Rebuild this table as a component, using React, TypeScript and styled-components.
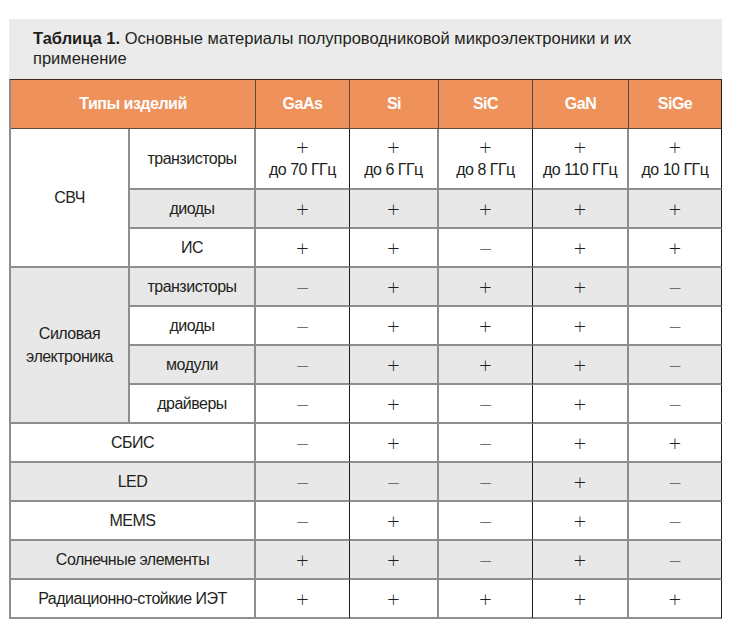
import { Fragment } from "react";
import styled, { createGlobalStyle } from "styled-components";

const GlobalStyle = createGlobalStyle`
  html, body {
    margin: 0;
    padding: 0;
    background: #ffffff;
  }
`;

const GRAY_LINE = "#8e8e8e";
const DARK_LINE = "#1c1c1c";
const HEAD_LINE = "#5e4a3e";

const materials = ["GaAs", "Si", "SiC", "GaN", "SiGe"];
// colour of the line on the right of each of the 7 columns
const columnLines = [GRAY_LINE, GRAY_LINE, DARK_LINE, GRAY_LINE, DARK_LINE, GRAY_LINE, DARK_LINE];

type Item = {
  name: string;
  values: string[];
  notes?: string[];
  shade: boolean;
};

type Group = {
  label: string;
  shade: boolean;
  items: Item[];
};

const groups: Group[] = [
  {
    label: "СВЧ",
    shade: false,
    items: [
      {
        name: "транзисторы",
        values: ["+", "+", "+", "+", "+"],
        notes: ["до 70 ГГц", "до 6 ГГц", "до 8 ГГц", "до 110 ГГц", "до 10 ГГц"],
        shade: false,
      },
      { name: "диоды", values: ["+", "+", "+", "+", "+"], shade: true },
      { name: "ИС", values: ["+", "+", "–", "+", "+"], shade: false },
    ],
  },
  {
    label: "Силовая электроника",
    shade: true,
    items: [
      { name: "транзисторы", values: ["–", "+", "+", "+", "–"], shade: true },
      { name: "диоды", values: ["–", "+", "+", "+", "–"], shade: false },
      { name: "модули", values: ["–", "+", "+", "+", "–"], shade: true },
      { name: "драйверы", values: ["–", "+", "–", "+", "–"], shade: false },
    ],
  },
];

const singles: Item[] = [
  { name: "СБИС", values: ["–", "+", "–", "+", "+"], shade: false },
  { name: "LED", values: ["–", "–", "–", "+", "–"], shade: true },
  { name: "MEMS", values: ["–", "+", "–", "+", "–"], shade: false },
  { name: "Солнечные элементы", values: ["+", "+", "–", "+", "–"], shade: true },
  { name: "Радиационно-стойкие ИЭТ", values: ["+", "+", "+", "+", "+"], shade: false },
];

const ValueCells = ({ item }: { item: Item }) => (
  <>
    {item.values.map((v, i) => (
      <Cell key={i} $shade={item.shade} $line={columnLines[i + 2]}>
        <Stack>
          <Sign $minus={v === "–"}>{v}</Sign>
          {item.notes && <Note>{item.notes[i]}</Note>}
        </Stack>
      </Cell>
    ))}
  </>
);

const GroupRows = ({ g }: { g: Group }) => (
  <>
    <Cell $shade={g.shade} $line={columnLines[0]} $rows={g.items.length}>
      <GroupLabel>{g.label}</GroupLabel>
    </Cell>
    {g.items.map((item) => (
      <Fragment key={item.name}>
        <Cell $shade={item.shade} $line={columnLines[1]}>
          {item.name}
        </Cell>
        <ValueCells item={item} />
      </Fragment>
    ))}
  </>
);

export default function App() {
  return (
    <>
      <GlobalStyle />
      <Figure>
        <Caption>
          <CaptionLabel>Таблица 1.</CaptionLabel> Основные материалы полупроводниковой микроэлектроники и их
          <br />
          применение
        </Caption>
        <Grid>
          <HeadCell $span={2} $line={HEAD_LINE}>
            Типы изделий
          </HeadCell>
          {materials.map((m, i) => (
            <HeadCell key={m} $span={1} $line={i === 4 ? DARK_LINE : HEAD_LINE}>
              {m}
            </HeadCell>
          ))}

          {groups.map((g) => (
            <GroupRows key={g.label} g={g} />
          ))}

          {singles.map((item) => (
            <Fragment key={item.name}>
              <Cell $shade={item.shade} $line={columnLines[1]} $span={2}>
                {item.name}
              </Cell>
              <ValueCells item={item} />
            </Fragment>
          ))}
        </Grid>
      </Figure>
    </>
  );
}

const Figure = styled.div`
  margin: 19px 0 0 9px;
  width: 713px;
`;

const Caption = styled.div`
  background: #ebebeb;
  height: 60px;
  box-sizing: border-box;
  padding: 9px 0 0 24px;
  font-family: "Liberation Sans", Arial, sans-serif;
  font-size: 16.5px;
  line-height: 20px;
  color: #231f20;
`;

const CaptionLabel = styled.b`
  font-weight: 700;
`;

const Grid = styled.div`
  display: grid;
  grid-template-columns: 119px 126px 94px 89px 94px 96px 93px;
  grid-template-rows: 49px 61px repeat(11, 39px);
  border-left: 2px solid ${GRAY_LINE};
  border-top: 1px solid #3a2a20;
  font-family: "Liberation Sans", Arial, sans-serif;
  font-size: 16px;
  letter-spacing: -0.5px;
  color: #231f20;
`;

const HeadCell = styled.div<{ $span: number; $line: string }>`
  grid-column: span ${(p) => p.$span};
  display: flex;
  align-items: center;
  justify-content: center;
  background: #ee915b;
  color: #ffffff;
  font-weight: 700;
  font-size: 16px;
  letter-spacing: -0.5px;
  border-right: 1.5px solid ${(p) => p.$line};
  border-bottom: 1.5px solid ${HEAD_LINE};
  box-sizing: border-box;
`;

const Cell = styled.div<{ $shade: boolean; $line: string; $span?: number; $rows?: number }>`
  grid-column: span ${(p) => p.$span ?? 1};
  grid-row: span ${(p) => p.$rows ?? 1};
  display: flex;
  align-items: center;
  justify-content: center;
  text-align: center;
  background: ${(p) => (p.$shade ? "#e8e8e8" : "#ffffff")};
  border-right: ${(p) => (p.$line === DARK_LINE ? "1.5px" : "2px")} solid ${(p) => p.$line};
  border-bottom: 2px solid ${GRAY_LINE};
  box-sizing: border-box;
  line-height: 20px;
`;

const GroupLabel = styled.span`
  line-height: 23px;
  padding: 0 6px;
`;

const Stack = styled.div`
  display: flex;
  flex-direction: column;
  align-items: center;
  gap: 3px;
`;

const Sign = styled.span<{ $minus: boolean }>`
  font-family: Lato, "Liberation Sans", sans-serif;
  font-weight: 300;
  font-size: ${(p) => (p.$minus ? "27px" : "22px")};
  line-height: 20px;
  letter-spacing: 0;
  color: ${(p) => (p.$minus ? "#6f6f6f" : "#1f1f1f")};
`;

const Note = styled.span`
  line-height: 20px;
`;
